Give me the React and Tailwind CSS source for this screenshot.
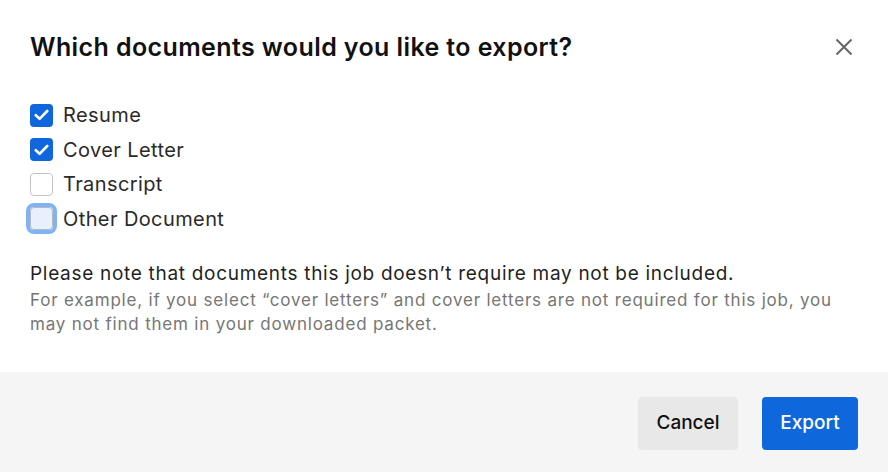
import { useState } from "react";

const docs = [
  { key: "resume", label: "Resume" },
  { key: "cover", label: "Cover Letter" },
  { key: "transcript", label: "Transcript" },
  { key: "other", label: "Other Document" },
];

const CheckBox = ({ checked, focused }) => (
  <span
    className={`flex h-[23px] w-[23px] shrink-0 items-center justify-center rounded-[4px] ${
      checked
        ? "bg-[#1066dc]"
        : focused
        ? "border border-[#b8b8b8] bg-[#e8f0fd] outline-4 outline-[#80b3f5]"
        : "border border-[#c4c4c4] bg-white"
    }`}
  >
    {checked && (
      <svg width="15" height="12" viewBox="0 0 15 12" fill="none">
        <path
          d="M1.8 6.2 5.6 9.8 13.2 2"
          stroke="white"
          strokeWidth="2.6"
          strokeLinecap="round"
          strokeLinejoin="round"
        />
      </svg>
    )}
  </span>
);

const App = () => {
  const [selected, setSelected] = useState({
    resume: true,
    cover: true,
    transcript: false,
    other: false,
  });

  return (
    <div className="h-[472px] w-[888px] bg-white font-['Inter',sans-serif] text-[#1a1a1a]">
      <div className="flex h-[372px] flex-col px-[30px]">
        <div className="flex items-center justify-between pt-[29px]">
          <h2 className="text-[25px] leading-[36px] font-semibold tracking-[0.4px] text-[#111]">
            Which documents would you like to export?
          </h2>
          <button className="mr-[5px] text-[#666]">
            <svg width="18" height="18" viewBox="0 0 18 18" fill="none">
              <path
                d="M1.5 1.5 16.5 16.5M16.5 1.5 1.5 16.5"
                stroke="currentColor"
                strokeWidth="2"
              />
            </svg>
          </button>
        </div>

        <div className="mt-[33px] flex flex-col">
          {docs.map((doc) => (
            <label
              key={doc.key}
              className="flex h-[34.5px] cursor-pointer items-center gap-[10px]"
              onClick={() =>
                setSelected({ ...selected, [doc.key]: !selected[doc.key] })
              }
            >
              <CheckBox
                checked={selected[doc.key]}
                focused={doc.key === "other"}
              />
              <span className="text-[20px] tracking-[0.4px] text-[#2a2a2a]">
                {doc.label}
              </span>
            </label>
          ))}
        </div>

        <p className="mt-[25px] text-[19px] leading-[26px] tracking-[0.7px] text-[#1f1f1f]">
          Please note that documents this job doesn’t require may not be
          included.
        </p>
        <p className="mt-[1px] max-w-[805px] text-[17px] leading-[24px] tracking-[0.8px] text-[#767676]">
          For example, if you select “cover letters” and cover letters are not
          required for this job, you may not find them in your downloaded
          packet.
        </p>
      </div>

      <div className="flex h-[100px] items-start justify-end gap-[24px] bg-[#f5f5f5] px-[30px] pt-[25px]">
        <button className="h-[53px] w-[100px] rounded-[4px] bg-[#e8e8e8] text-[19px] font-medium text-[#111]">
          Cancel
        </button>
        <button className="h-[53px] w-[96px] rounded-[4px] bg-[#0f67dc] text-[19px] font-medium text-white">
          Export
        </button>
      </div>
    </div>
  );
};

export default App;
